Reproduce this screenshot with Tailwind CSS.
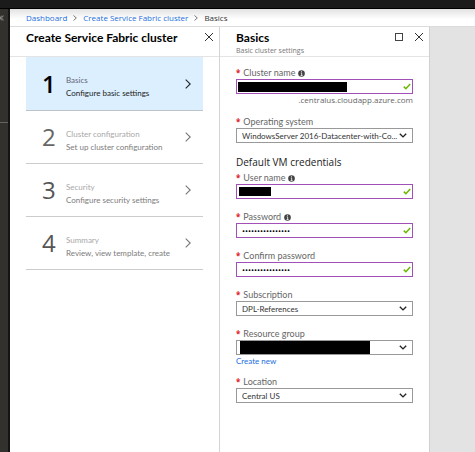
<!DOCTYPE html>
<html lang="en">
<head>
<meta charset="utf-8">
<meta name="viewport" content="width=device-width, initial-scale=1">
<title>Create Service Fabric cluster</title>
<script src="https://cdn.jsdelivr.net/npm/@tailwindcss/browser@4"></script>
</head>
<body class="flex min-h-screen flex-col bg-[#1b1b1b] font-['Lato','Open_Sans',sans-serif] text-[8px] leading-[12px] text-[#333]">
<svg class="hidden" aria-hidden="true">
  <symbol id="close" viewBox="0 0 10 10"><path d="M1 1l8 8M9 1l-8 8" fill="none" stroke="currentColor" stroke-width="1"/></symbol>
  <symbol id="right" viewBox="0 0 6 10"><path d="M0.7 0.7L5.2 5L0.7 9.3" fill="none" stroke="currentColor" stroke-width="1.1"/></symbol>
  <symbol id="crumb" viewBox="0 0 4 6"><path d="M0.5 0.5L3.3 3L0.5 5.5" fill="none" stroke="currentColor" stroke-width="0.8"/></symbol>
  <symbol id="down" viewBox="0 0 8 5"><path d="M0.8 0.8L4 3.9L7.2 0.8" fill="none" stroke="currentColor" stroke-width="1.4"/></symbol>
  <symbol id="check" viewBox="0 0 8 7"><path d="M0.8 3.6L2.9 5.7L7.2 1" fill="none" stroke="currentColor" stroke-width="1.5"/></symbol>
  <symbol id="info" viewBox="0 0 8 8"><circle cx="4" cy="4" r="3.8" fill="#444"/><path d="M4 1.4v1.2M3.2 3.4h1v2.8M3 6.3h2.2" fill="none" stroke="#fff" stroke-width="0.9"/></symbol>
</svg>
<header class="h-[9px] shrink-0 border-b border-black bg-[#1b1b1b]"></header>
<div class="flex grow">
  <aside class="w-[10px] shrink-0 border-r-2 border-[#151412] bg-[#33312e] text-[#aaa]">
    <button aria-label="Expand menu" class="flex h-[18px] w-full items-center"><svg class="h-[6px] w-[4px]" viewBox="0 0 4 6"><path d="M1.8 0.6L0 3l1.8 2.4M3.6 0.6L1.4 3l2.2 2.4" fill="none" stroke="currentColor" stroke-width="0.8"/></svg></button>
    <div class="mt-[95px] h-px bg-[#66635f]"></div>
  </aside>
  <div class="flex min-w-0 grow flex-col bg-[#e3e3e3]">
    <nav aria-label="Breadcrumb" class="flex h-[18px] shrink-0 items-center gap-[6px] border-b border-[#dcdcdc] bg-linear-to-b from-[#e2e2e2] to-white to-60% pl-4 font-['Open_Sans',sans-serif]">
      <a href="#" class="text-[#1b6fe0]">Dashboard</a>
      <svg class="h-[6px] w-[4px] text-[#555]"><use href="#crumb"/></svg>
      <a href="#" class="text-[#1b6fe0]">Create Service Fabric cluster</a>
      <svg class="h-[6px] w-[4px] text-[#555]"><use href="#crumb"/></svg>
      <span aria-current="page">Basics</span>
    </nav>
    <div class="flex grow">
      <section class="w-[210px] border-r border-[#d4d4d4] bg-white">
        <div class="flex h-[30px] items-start justify-between border-b border-[#e4e4e4] pt-[2px] pr-[5px] pl-4">
          <h1 class="text-[12px] leading-[18px] font-bold text-black">Create Service Fabric cluster</h1>
          <button aria-label="Close blade" class="mt-[3px] text-[#333]"><svg class="size-[10px]"><use href="#close"/></svg></button>
        </div>
        <ol class="pr-4 pl-4">
          <li class="border-b border-[#bcc4ca] bg-[#dbeffe]"><a href="#" class="flex h-[53px] items-center pr-3 pl-4">
            <span class="w-6 font-['Open_Sans',sans-serif] text-[24px] leading-[30px] font-semibold text-black">1</span>
            <span class="grow pt-[7px]"><span class="block leading-[13px] text-[#667]">Basics</span><span class="block leading-[13px] text-[#222]">Configure basic settings</span></span>
            <svg class="h-[10px] w-[6px] text-[#222]"><use href="#right"/></svg></a></li>
          <li class="border-b border-[#ccc]"><a href="#" class="flex h-[52px] items-center pr-3 pl-4">
            <span class="w-6 font-['Open_Sans',sans-serif] text-[24px] leading-[30px] text-[#666]">2</span>
            <span class="grow pt-[7px]"><span class="block leading-[13px] text-[#a8a8a8]">Cluster configuration</span><span class="block leading-[13px] text-[#7c7c7c]">Set up cluster configuration</span></span>
            <svg class="h-[10px] w-[6px] text-[#777]"><use href="#right"/></svg></a></li>
          <li class="border-b border-[#ccc]"><a href="#" class="flex h-[52px] items-center pr-3 pl-4">
            <span class="w-6 font-['Open_Sans',sans-serif] text-[24px] leading-[30px] text-[#555]">3</span>
            <span class="grow pt-[7px]"><span class="block leading-[13px] text-[#a8a8a8]">Security</span><span class="block leading-[13px] text-[#7c7c7c]">Configure security settings</span></span>
            <svg class="h-[10px] w-[6px] text-[#777]"><use href="#right"/></svg></a></li>
          <li class="border-b border-[#ccc]"><a href="#" class="flex h-[52px] items-center pr-3 pl-4">
            <span class="w-6 font-['Open_Sans',sans-serif] text-[24px] leading-[30px] text-[#555]">4</span>
            <span class="grow pt-[7px]"><span class="block leading-[13px] text-[#a8a8a8]">Summary</span><span class="block leading-[13px] text-[#7c7c7c]">Review, view template, create</span></span>
            <svg class="h-[10px] w-[6px] text-[#777]"><use href="#right"/></svg></a></li>
        </ol>
      </section>
      <section class="w-[210px] border-r border-[#d0d0d0] bg-white">
        <div class="flex h-[30px] items-start border-b border-[#e4e4e4] pt-[2px] pr-[5px] pl-4">
          <div class="grow">
            <h2 class="text-[12px] leading-[18px] font-bold text-black">Basics</h2>
            <p class="font-['Open_Sans',sans-serif] text-[7px] leading-[8px] text-[#777]">Basic cluster settings</p>
          </div>
          <button aria-label="Maximize" class="mt-[3px] mr-[10px] p-px"><span class="block size-[8px] border border-[#444]"></span></button>
          <button aria-label="Close" class="mt-[3px] text-[#333]"><svg class="size-[10px]"><use href="#close"/></svg></button>
        </div>
        <form class="px-4 pt-[10px]">
          <div class="mb-[12px]">
            <label for="cluster" class="flex h-[12px] items-center gap-[3px] text-[9px] text-[#666]"><b class="font-['Open_Sans',sans-serif] text-[8px] text-[#e0202a]">*</b>Cluster name<svg class="size-[7px]" viewBox="0 0 8 8"><use href="#info"/></svg></label>
            <div class="relative">
              <input id="cluster" type="text" class="block h-[15px] w-full border border-[#a24fb8] bg-white px-[5px] outline-none">
              <span class="absolute top-[3px] left-[2px] h-[10px] w-[109px] bg-black"></span>
              <svg class="absolute top-[4px] right-[2px] h-[7px] w-[8px] text-[#6bb700]"><use href="#check"/></svg>
            </div>
            <p class="h-[10px] text-right font-['Open_Sans',sans-serif] text-[#666]">.centralus.cloudapp.azure.com</p>
          </div>
          <div class="mb-[12px]">
            <label for="os" class="flex h-[12px] items-center gap-[3px] text-[9px] text-[#666]"><b class="font-['Open_Sans',sans-serif] text-[8px] text-[#e0202a]">*</b>Operating system</label>
            <div class="relative">
              <select id="os" class="block h-[15px] w-full appearance-none border border-[#999] bg-white pl-[5px]"><option>WindowsServer 2016-Datacenter-with-Co...</option></select>
              <svg class="pointer-events-none absolute top-[5px] right-[6px] h-[5px] w-[8px] text-[#222]"><use href="#down"/></svg>
            </div>
          </div>
          <h3 class="-mt-px h-[18px] font-['Open_Sans',sans-serif] text-[10px] leading-[16px] text-[#222]">Default VM credentials</h3>
          <div class="mb-[12px]">
            <label for="user" class="flex h-[12px] items-center gap-[3px] text-[9px] text-[#666]"><b class="font-['Open_Sans',sans-serif] text-[8px] text-[#e0202a]">*</b>User name<svg class="size-[7px]" viewBox="0 0 8 8"><use href="#info"/></svg></label>
            <div class="relative">
              <input id="user" type="text" class="block h-[15px] w-full border border-[#a24fb8] bg-white px-[5px] outline-none">
              <span class="absolute top-[3px] left-[3px] h-[9px] w-[32px] bg-black"></span>
              <svg class="absolute top-[4px] right-[2px] h-[7px] w-[8px] text-[#6bb700]"><use href="#check"/></svg>
            </div>
          </div>
          <div class="mb-[12px]">
            <label for="pw" class="flex h-[12px] items-center gap-[3px] text-[9px] text-[#666]"><b class="font-['Open_Sans',sans-serif] text-[8px] text-[#e0202a]">*</b>Password<svg class="size-[7px]" viewBox="0 0 8 8"><use href="#info"/></svg></label>
            <div class="relative">
              <input id="pw" type="password" value="passwordpassword" class="block h-[15px] w-full border border-[#a24fb8] bg-white px-[5px] font-['Open_Sans',sans-serif] text-black outline-none">
              <svg class="absolute top-[4px] right-[2px] h-[7px] w-[8px] text-[#6bb700]"><use href="#check"/></svg>
            </div>
          </div>
          <div class="mb-[12px]">
            <label for="pw2" class="flex h-[12px] items-center gap-[3px] text-[9px] text-[#666]"><b class="font-['Open_Sans',sans-serif] text-[8px] text-[#e0202a]">*</b>Confirm password</label>
            <div class="relative">
              <input id="pw2" type="password" value="passwordpassword" class="block h-[15px] w-full border border-[#a24fb8] bg-white px-[5px] font-['Open_Sans',sans-serif] text-black outline-none">
              <svg class="absolute top-[4px] right-[2px] h-[7px] w-[8px] text-[#6bb700]"><use href="#check"/></svg>
            </div>
          </div>
          <div class="mb-[12px]">
            <label for="sub" class="flex h-[12px] items-center gap-[3px] text-[9px] text-[#666]"><b class="font-['Open_Sans',sans-serif] text-[8px] text-[#e0202a]">*</b>Subscription</label>
            <div class="relative">
              <select id="sub" class="block h-[15px] w-full appearance-none border border-[#999] bg-white pl-[5px]"><option>DPL-References</option></select>
              <svg class="pointer-events-none absolute top-[5px] right-[6px] h-[5px] w-[8px] text-[#222]"><use href="#down"/></svg>
            </div>
          </div>
          <div class="mb-[11px]">
            <label for="rg" class="flex h-[12px] items-center gap-[3px] text-[9px] text-[#666]"><b class="font-['Open_Sans',sans-serif] text-[8px] text-[#e0202a]">*</b>Resource group</label>
            <div class="relative">
              <select id="rg" class="block h-[15px] w-full appearance-none border border-[#999] bg-white pl-[5px]"><option></option></select>
              <span class="pointer-events-none absolute top-px left-[4px] h-[13px] w-[130px] bg-black"></span>
              <svg class="pointer-events-none absolute top-[5px] right-[6px] h-[5px] w-[8px] text-[#222]"><use href="#down"/></svg>
            </div>
            <a href="#" class="block h-[10px] text-[#1b6fe0]">Create new</a>
          </div>
          <div>
            <label for="loc" class="flex h-[12px] items-center gap-[3px] text-[9px] text-[#666]"><b class="font-['Open_Sans',sans-serif] text-[8px] text-[#e0202a]">*</b>Location</label>
            <div class="relative">
              <select id="loc" class="block h-[15px] w-full appearance-none border border-[#999] bg-white pl-[5px]"><option>Central US</option></select>
              <svg class="pointer-events-none absolute top-[5px] right-[6px] h-[5px] w-[8px] text-[#222]"><use href="#down"/></svg>
            </div>
          </div>
        </form>
      </section>
    </div>
  </div>
</div>
</body>
</html>
